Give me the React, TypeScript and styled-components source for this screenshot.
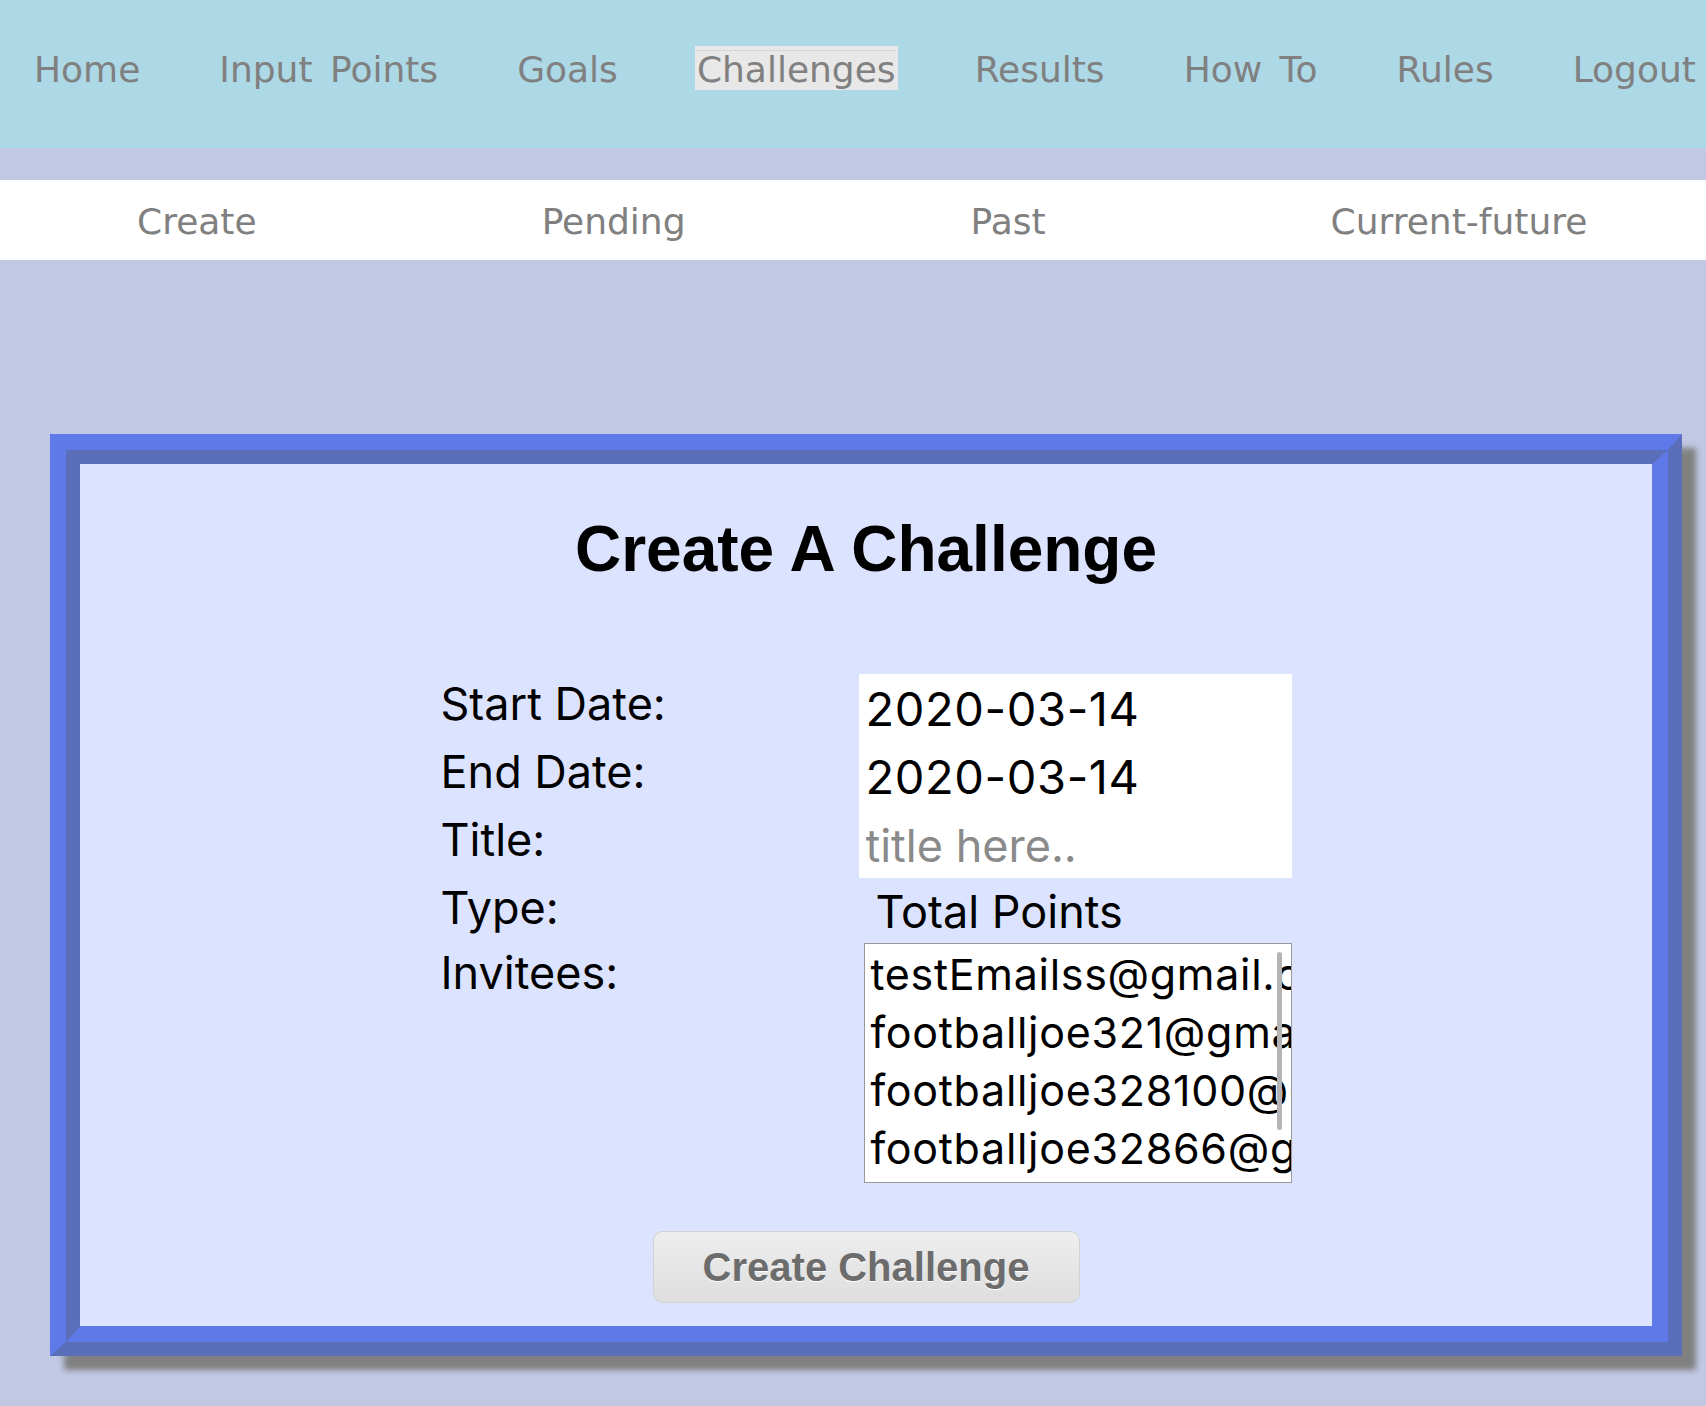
import React from "react";
import styled, { createGlobalStyle } from "styled-components";

const GlobalStyle = createGlobalStyle`
  html, body {
    margin: 0;
    padding: 0;
    background: #c1c8e4;
  }
  body {
    min-height: 1406px;
    font-family: "DejaVu Sans", Verdana, sans-serif;
  }
  * { box-sizing: border-box; }
`;

const TopNav = styled.nav`
  height: 148px;
  background: #add8e6;
  display: flex;
  align-items: flex-start;
  gap: 75px;
  padding: 46px 0 0 32px;
  white-space: nowrap;
`;

const NavLink = styled.a<{ $active?: boolean }>`
  position: relative;
  display: inline-block;
  padding: 4px 2px 0;
  font-family: "DejaVu Sans", Verdana, sans-serif;
  font-size: 36px;
  line-height: 40px;
  word-spacing: 6px;
  color: #808080;
  text-decoration: none;
  background: ${(p) => (p.$active ? "#e8e8e8" : "transparent")};
  &::before {
    content: "";
    display: ${(p) => (p.$active ? "block" : "none")};
    position: absolute;
    left: 2px;
    right: 2px;
    top: 4px;
    border-top: 1px dotted #c6c6c6;
  }
`;

const SubNav = styled.nav`
  margin-top: 32px;
  height: 80px;
  background: #ffffff;
  display: flex;
  align-items: center;
  gap: 285px;
  padding: 4px 0 0 137px;
  white-space: nowrap;
`;

const SubLink = styled.a`
  font-family: "DejaVu Sans", Verdana, sans-serif;
  font-size: 36px;
  line-height: 40px;
  color: #808080;
  text-decoration: none;
`;

const CardFrame = styled.section`
  margin: 174px 0 0 50px;
  width: 1632px;
  border-style: solid;
  border-width: 16px 14px 14px 16px;
  border-color: #5f7ae8 #5b6eba #5b6eba #5f7ae8;
  box-shadow: 14px 14px 6px #808080;
`;

const CardBody = styled.div`
  border-style: solid;
  border-width: 14px 16px 16px 14px;
  border-color: #5b6eba #5f7ae8 #5f7ae8 #5b6eba;
  background: #dce3fe;
  padding: 48px 0 23px;
  display: flex;
  flex-direction: column;
  align-items: center;
`;

const Title = styled.h1`
  margin: 0;
  font-family: "Liberation Sans", Arial, sans-serif;
  font-weight: 700;
  font-size: 64px;
  line-height: 74px;
  color: #000;
`;

const FormGrid = styled.div`
  margin-top: 88px;
  width: 851px;
  display: grid;
  grid-template-columns: 418px 433px;
  grid-template-rows: 68px 68px 68px 65px 240px;
`;

const Label = styled.label`
  display: block;
  padding-top: 3px;
  font-family: Inter, "Noto Sans", sans-serif;
  font-size: 45px;
  line-height: 54px;
  color: #000;
`;

const TextInput = styled.input`
  display: block;
  width: 100%;
  height: 68px;
  margin: 0;
  padding: 0 7px;
  border: none;
  outline: none;
  background: #ffffff;
  font-family: Inter, "Noto Sans", sans-serif;
  font-size: 47px;
  letter-spacing: 0.6px;
  color: #000;
  &::placeholder {
    color: #8a8a8a;
    font-size: 45px;
    letter-spacing: 0;
  }
`;

const TypeValue = styled.div`
  padding: 6px 0 0 17px;
  font-family: Inter, "Noto Sans", sans-serif;
  font-size: 45px;
  line-height: normal;
  color: #000;
`;

const InviteeBox = styled.div`
  position: relative;
  margin-left: 5px;
  width: 428px;
  height: 240px;
  border: 1px solid #999999;
  background: #ffffff;
  overflow: hidden;
  padding: 1px 0 0 6px;
`;

const Invitee = styled.div`
  font-family: Inter, "Noto Sans", sans-serif;
  font-size: 43px;
  letter-spacing: 0.7px;
  line-height: 58px;
  color: #000;
  white-space: nowrap;
`;

const ScrollThumb = styled.div`
  position: absolute;
  top: 8px;
  right: 9px;
  width: 5px;
  height: 178px;
  border-radius: 3px;
  background: #b4b4b4;
`;

const SubmitButton = styled.button`
  margin-top: 48px;
  width: 427px;
  height: 72px;
  border: 1px solid #d2d2d2;
  border-radius: 10px;
  background: linear-gradient(#eeeeee, #dedede);
  font-family: "Liberation Sans", Arial, sans-serif;
  font-weight: 700;
  font-size: 40px;
  color: #6c6c6c;
  text-shadow: 0 1px 0 #ffffff;
  cursor: pointer;
`;

const navItems = [
  "Home",
  "Input Points",
  "Goals",
  "Challenges",
  "Results",
  "How To",
  "Rules",
  "Logout",
];

const subItems = ["Create", "Pending", "Past", "Current-future"];

const invitees = [
  "testEmailss@gmail.com",
  "footballjoe321@gmail.com",
  "footballjoe328100@gmail.com",
  "footballjoe32866@gmail.com",
];

export default function App() {
  return (
    <>
      <GlobalStyle />
      <TopNav>
        {navItems.map((item) => (
          <NavLink key={item} href="#" $active={item === "Challenges"}>
            {item}
          </NavLink>
        ))}
      </TopNav>
      <SubNav>
        {subItems.map((item) => (
          <SubLink key={item} href="#">
            {item}
          </SubLink>
        ))}
      </SubNav>
      <CardFrame>
        <CardBody>
          <Title>Create A Challenge</Title>
          <FormGrid>
            <Label>Start Date:</Label>
            <TextInput type="text" defaultValue="2020-03-14" />
            <Label>End Date:</Label>
            <TextInput type="text" defaultValue="2020-03-14" />
            <Label>Title:</Label>
            <TextInput type="text" placeholder="title here.." />
            <Label>Type:</Label>
            <TypeValue>Total Points</TypeValue>
            <Label>Invitees:</Label>
            <InviteeBox>
              {invitees.map((email) => (
                <Invitee key={email}>{email}</Invitee>
              ))}
              <ScrollThumb />
            </InviteeBox>
          </FormGrid>
          <SubmitButton type="button">Create Challenge</SubmitButton>
        </CardBody>
      </CardFrame>
    </>
  );
}
